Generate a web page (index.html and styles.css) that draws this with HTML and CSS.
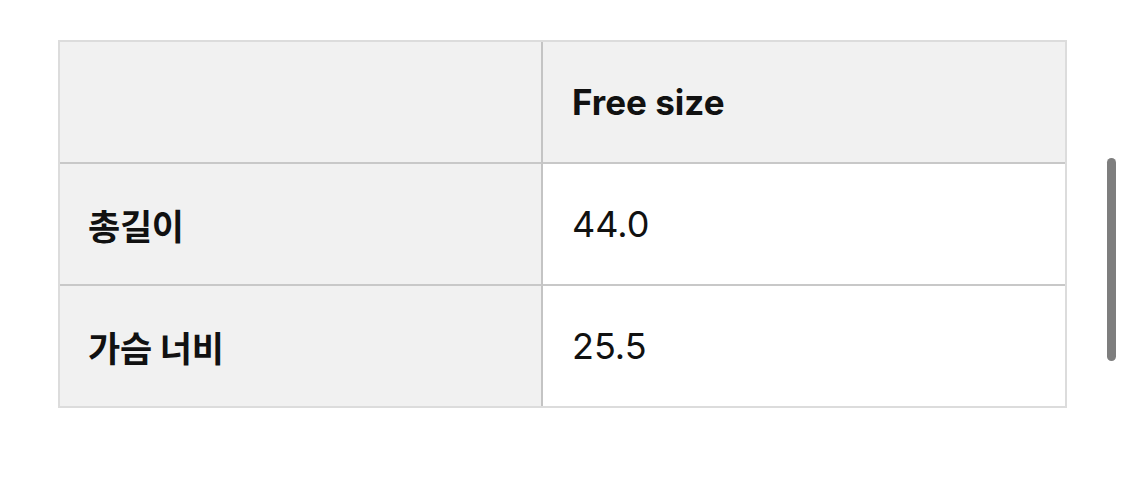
FILE: index.html
```html
<!DOCTYPE html>
<html lang="ko">
<head>
<meta charset="utf-8">
<link rel="stylesheet" href="styles.css">
</head>
<body>
<div class="page">
  <table class="size-table">
    <tr class="head-row">
      <th class="label-cell"></th>
      <th class="value-cell head">Free size</th>
    </tr>
    <tr>
      <th class="label-cell">총길이</th>
      <td class="value-cell">44.0</td>
    </tr>
    <tr class="last-row">
      <th class="label-cell">가슴 너비</th>
      <td class="value-cell">25.5</td>
    </tr>
  </table>
  <div class="scrollbar"></div>
</div>
</body>
</html>
```

FILE: styles.css
```css
html, body {
  margin: 0;
  padding: 0;
  background: #ffffff;
}

body {
  width: 1125px;
  height: 477px;
  overflow: hidden;
  font-family: Inter, "Noto Sans CJK KR", "Noto Sans", sans-serif;
  color: #111111;
}

.page {
  position: relative;
  padding: 40px 0 0 58px;
  height: 437px;
}

.size-table {
  width: 1009px;
  border-collapse: separate;
  border-spacing: 0;
  border: 2px solid #dcdcdc;
  table-layout: fixed;
}

.size-table th,
.size-table td {
  height: 120px;
  padding: 0;
  text-align: left;
  vertical-align: middle;
  border-bottom: 2px solid #c8c8c8;
}

.size-table .last-row th,
.size-table .last-row td {
  border-bottom: 0;
  height: 120px;
}

.label-cell {
  width: 453px;
  background: #f1f1f1;
  border-right: 2px solid #c4c4c4;
  padding-left: 28px !important;
  font-size: 35px;
  font-weight: 700;
  letter-spacing: -0.3px;
}

.value-cell {
  background: #ffffff;
  padding-left: 29px !important;
  font-size: 36px;
  font-weight: 400;
}

.value-cell.head {
  background: #f1f1f1;
  font-weight: 700;
  font-size: 35px;
}

.scrollbar {
  position: absolute;
  left: 1107px;
  top: 158px;
  width: 9px;
  height: 203px;
  border-radius: 5px;
  background: #7e7e7e;
}
```
